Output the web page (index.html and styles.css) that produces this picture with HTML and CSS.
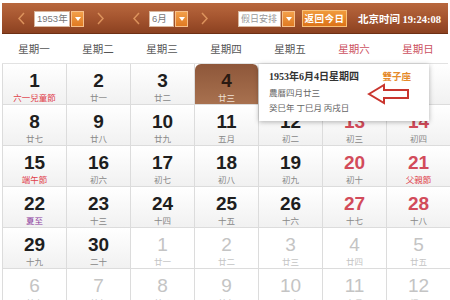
FILE: index.html
```html
<!DOCTYPE html>
<html lang="zh">
<head>
<meta charset="utf-8">
<link rel="stylesheet" href="styles.css">
</head>
<body>
<div class="cal">
  <div class="bar">
    <span class="chev prev"><svg width="7" height="13" viewBox="0 0 7 13"><path d="M6 1 L1 6.5 L6 12" fill="none" stroke="#e39a62" stroke-width="1.5"/></svg></span>
    <span class="sel w36">1953年</span><span class="dd"></span>
    <span class="chev next"><svg width="7" height="13" viewBox="0 0 7 13"><path d="M1 1 L6 6.5 L1 12" fill="none" stroke="#e39a62" stroke-width="1.5"/></svg></span>
    <span class="chev prev2"><svg width="7" height="13" viewBox="0 0 7 13"><path d="M6 1 L1 6.5 L6 12" fill="none" stroke="#e39a62" stroke-width="1.5"/></svg></span>
    <span class="sel w25">6月</span><span class="dd"></span>
    <span class="chev next"><svg width="7" height="13" viewBox="0 0 7 13"><path d="M1 1 L6 6.5 L1 12" fill="none" stroke="#e39a62" stroke-width="1.5"/></svg></span>
    <span class="sel w43">假日安排</span><span class="dd"></span>
    <span class="today">返回今日</span>
    <span class="clock">北京时间 19:24:08</span>
  </div>
  <div class="weekdays">
    <div>星期一</div><div>星期二</div><div>星期三</div><div>星期四</div><div>星期五</div><div class="we">星期六</div><div class="we">星期日</div>
  </div>
  <div class="grid">
    <div class="c"><b>1</b><i class="fest">六一兒童節</i></div>
    <div class="c"><b>2</b><i>廿一</i></div>
    <div class="c"><b>3</b><i>廿二</i></div>
    <div class="c sel-day"><b>4</b><i>廿三</i></div>
    <div class="c"><b>5</b><i>廿四</i></div>
    <div class="c we"><b>6</b><i>廿五</i></div>
    <div class="c we"><b>7</b><i>廿六</i></div>

    <div class="c"><b>8</b><i>廿七</i></div>
    <div class="c"><b>9</b><i>廿八</i></div>
    <div class="c"><b>10</b><i>廿九</i></div>
    <div class="c"><b>11</b><i>五月</i></div>
    <div class="c"><b>12</b><i>初二</i></div>
    <div class="c we"><b>13</b><i>初三</i></div>
    <div class="c we"><b>14</b><i>初四</i></div>

    <div class="c"><b>15</b><i class="fest">端午節</i></div>
    <div class="c"><b>16</b><i>初六</i></div>
    <div class="c"><b>17</b><i>初七</i></div>
    <div class="c"><b>18</b><i>初八</i></div>
    <div class="c"><b>19</b><i>初九</i></div>
    <div class="c we"><b>20</b><i>初十</i></div>
    <div class="c we"><b>21</b><i class="fest">父親節</i></div>

    <div class="c"><b>22</b><i class="term">夏至</i></div>
    <div class="c"><b>23</b><i>十三</i></div>
    <div class="c"><b>24</b><i>十四</i></div>
    <div class="c"><b>25</b><i>十五</i></div>
    <div class="c"><b>26</b><i>十六</i></div>
    <div class="c we"><b>27</b><i>十七</i></div>
    <div class="c we"><b>28</b><i>十八</i></div>

    <div class="c"><b>29</b><i>十九</i></div>
    <div class="c"><b>30</b><i>二十</i></div>
    <div class="c o"><b>1</b><i>廿一</i></div>
    <div class="c o"><b>2</b><i>廿二</i></div>
    <div class="c o"><b>3</b><i>廿三</i></div>
    <div class="c o"><b>4</b><i>廿四</i></div>
    <div class="c o"><b>5</b><i>廿五</i></div>

    <div class="c o"><b>6</b><i>廿六</i></div>
    <div class="c o"><b>7</b><i>廿七</i></div>
    <div class="c o"><b>8</b><i>廿八</i></div>
    <div class="c o"><b>9</b><i>廿九</i></div>
    <div class="c o"><b>10</b><i>三十</i></div>
    <div class="c o"><b>11</b><i>六月</i></div>
    <div class="c o"><b>12</b><i>初二</i></div>

    <div class="tip">
      <div class="tip-top"><span class="tip-date">1953年6月4日星期四</span><span class="zodiac">雙子座</span></div>
      <div class="tip-line">農曆四月廿三</div>
      <div class="tip-line">癸巳年 丁巳月 丙戌日</div>
      <svg class="arrow" width="44" height="22" viewBox="0 0 44 22"><path d="M2 11 L17 2 L17 7 L41 7 L41 15 L17 15 L17 20 Z" fill="#fff" stroke="#c9352e" stroke-width="2" stroke-linejoin="miter"/></svg>
    </div>
  </div>
</div>
</body>
</html>
```
FILE: styles.css
```css
* { box-sizing: border-box; }
html, body { margin: 0; padding: 0; background: #fff; }
body { font-family: "Noto Sans CJK SC", "Liberation Sans", sans-serif; overflow: hidden; }
.cal { margin: 3px 2px 0 2px; width: 446px; }
.bar {
  height: 31px;
  display: flex;
  align-items: center;
  background: linear-gradient(to bottom, #b8683e 0%, #a65630 45%, #8a4020 100%);
  box-shadow: inset 0 -1px 0 #6e3014;
}
.chev { display: flex; width: 7px; height: 13px; opacity: 0.9; }
.chev.prev { margin-left: 16px; margin-right: 9px; }
.chev.next { margin-left: 13px; }
.chev.prev2 { margin-left: 29px; margin-right: 9px; }
.sel {
  height: 16px;
  background: #fff;
  border: 1px solid #d9b79e;
  color: #777;
  font-size: 9.5px;
  line-height: 14px;
  padding-left: 2px;
  white-space: nowrap;
  overflow: hidden;
  font-family: "Liberation Sans", "Noto Sans CJK SC", sans-serif;
}
.w36 { width: 36px; }
.w25 { width: 25px; }
.w43 { width: 43px; margin-left: 30px; color: #999; font-size: 9px; }
.dd {
  width: 13px; height: 16px; margin-left: 1px;
  background: linear-gradient(#f3a04a, #e07a22);
  border: 1px solid #f7c08a;
  position: relative;
  flex: none;
}
.dd::after {
  content: ""; position: absolute; left: 3px; top: 5px;
  border-left: 3px solid transparent; border-right: 3px solid transparent; border-top: 4px solid #fff;
}
.today {
  margin-left: 7px;
  width: 45px; height: 17px;
  background: linear-gradient(#f09a3c, #dd7318);
  border: 1px solid #f8c078;
  color: #fff;
  font-size: 9.5px; font-weight: bold; letter-spacing: 0.5px;
  line-height: 15px; text-align: center;
  white-space: nowrap;
  flex: none;
}
.clock {
  margin-left: 11px;
  color: #fff;
  font-family: "Liberation Serif", "Noto Sans CJK SC", serif;
  font-weight: bold;
  font-size: 10.5px;
  white-space: nowrap;
}
.weekdays {
  display: grid;
  grid-template-columns: repeat(7, 64px);
  height: 30px;
  border-bottom: 1px solid #e2e2e2;
}
.weekdays div {
  text-align: center;
  line-height: 30px;
  font-size: 10.5px;
  color: #555;
}
.weekdays .we { color: #cc5060; }
.grid {
  position: relative;
  display: grid;
  grid-template-columns: repeat(7, 64px);
  grid-auto-rows: 41px;
  border-left: 1px solid #dcdcdc;
  width: 448px;
}
.c {
  border-right: 1px solid #dcdcdc;
  border-bottom: 1px solid #dcdcdc;
  background: linear-gradient(#ffffff, #f1f1f1);
  text-align: center;
  padding-top: 7px;
}
.c b {
  display: block;
  font-family: "Liberation Sans", Arial, sans-serif;
  font-weight: bold;
  font-size: 19px;
  line-height: 20px;
  color: #1e1e1e;
}
.c i {
  display: block;
  font-style: normal;
  font-size: 8.5px;
  line-height: 12px;
  color: #888;
}
.c.we b { color: #d24b5a; }
.c i.fest { color: #e0404a; }
.c i.term { color: #8a3a9c; }
.c.o { background: #fff; }
.c.o b { color: #c4c4c4; font-weight: normal; }
.c.o i { color: #c4c4c4; }
.c.sel-day {
  background: linear-gradient(#8e573a, #a8714f);
  border-radius: 6px 6px 0 0;
}
.c.sel-day b { color: #2a1a12; }
.c.sel-day i { color: #f0e2d6; }
.tip {
  position: absolute;
  left: 256px; top: 0;
  width: 170px; height: 57px;
  background: #fff;
  box-shadow: 0 1px 5px rgba(0,0,0,0.3);
  padding: 5px 0 0 10px;
}
.tip-top { display: flex; width: 142px; justify-content: space-between; align-items: baseline; }
.tip-date { font-size: 10px; font-weight: bold; color: #333; line-height: 16px; font-family: "Liberation Serif", "Noto Sans CJK SC", serif; }
.zodiac { font-size: 9.5px; color: #e58a2a; font-weight: bold; }
.tip-line { font-size: 8.5px; color: #666; line-height: 15px; }
.arrow { position: absolute; left: 108px; top: 19px; }
```
